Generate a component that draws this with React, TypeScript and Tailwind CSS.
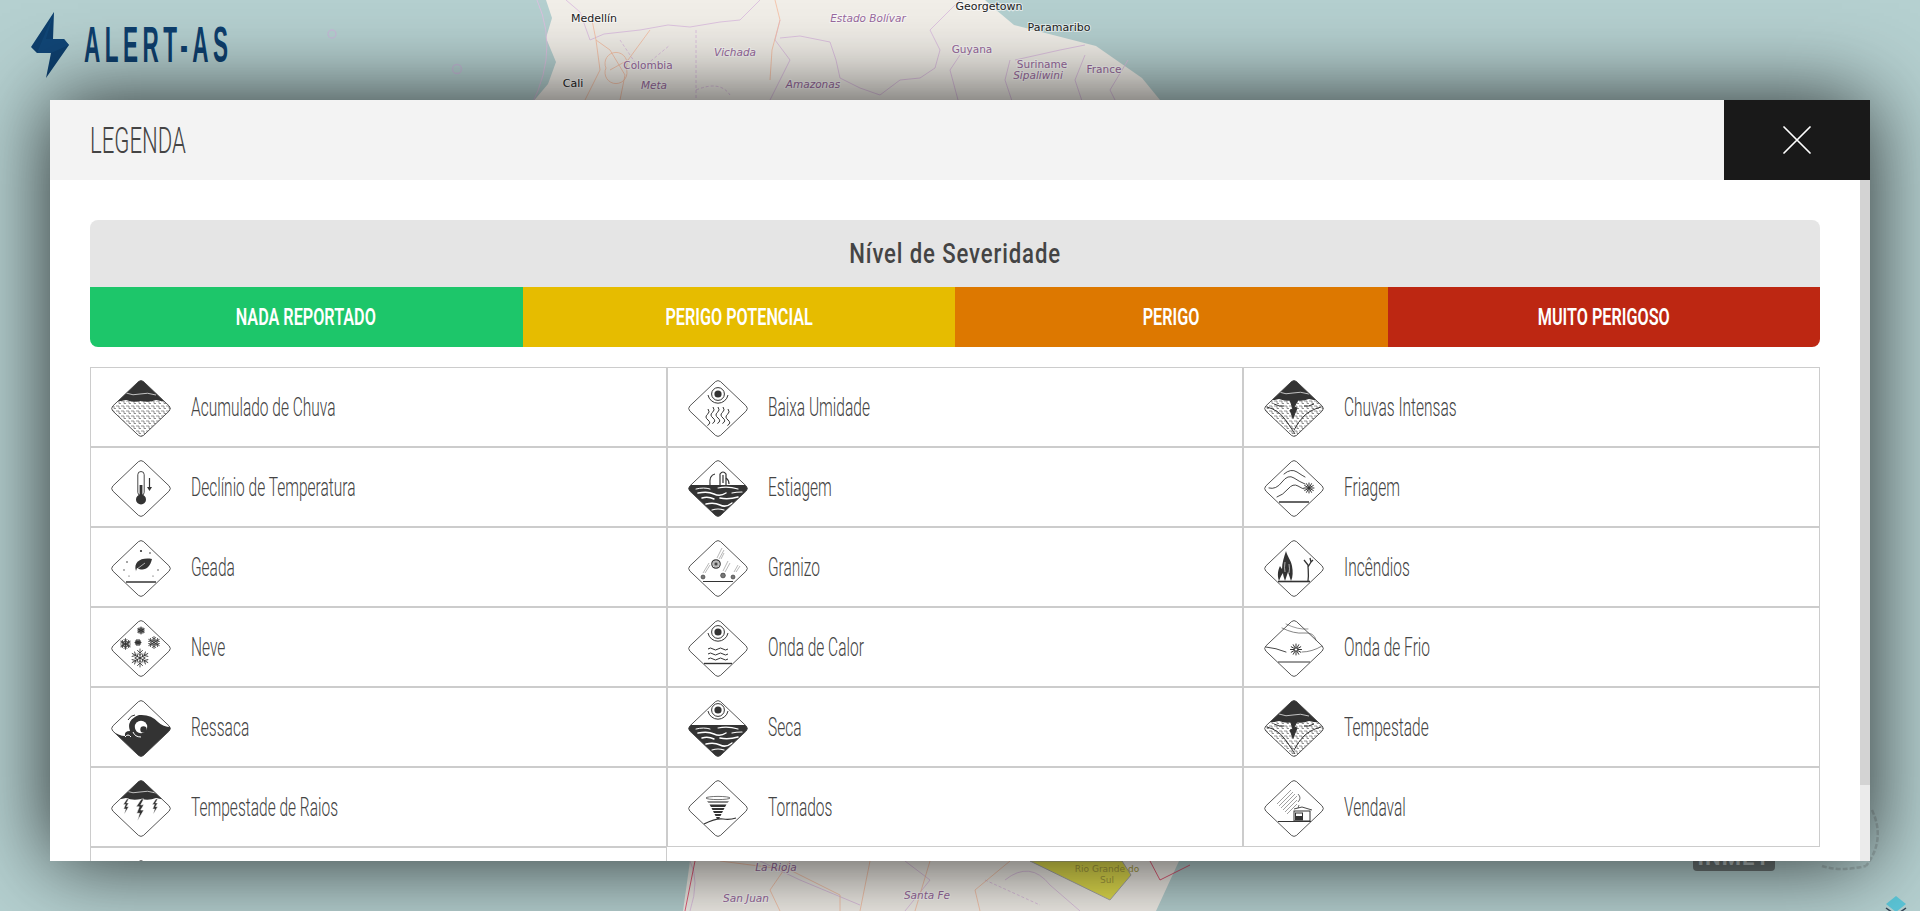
import type { ReactNode } from "react";

const INK = "#333";

const asterisk = (cx: number, cy: number, r: number, w = 0.8) => (
  <g stroke={INK} strokeWidth={w} strokeLinecap="round">
    {[0, 30, 60, 90, 120, 150].map((a) => {
      const dx = Math.cos((a * Math.PI) / 180) * r;
      const dy = Math.sin((a * Math.PI) / 180) * r;
      return <line key={a} x1={cx - dx} y1={cy - dy} x2={cx + dx} y2={cy + dy} />;
    })}
  </g>
);

// six arms with little branches, for the snow icon
const flake = (cx: number, cy: number, r: number) => (
  <g stroke={INK} strokeWidth=".85" strokeLinecap="round" fill="none">
    {[0, 60, 120, 180, 240, 300].map((a) => (
      <g key={a} transform={`rotate(${a} ${cx} ${cy})`}>
        <line x1={cx} y1={cy} x2={cx} y2={cy - r} />
        <path d={`M${cx - r * 0.28} ${cy - r * 0.85}L${cx} ${cy - r * 0.55}L${cx + r * 0.28} ${cy - r * 0.85}`} />
        <path d={`M${cx - r * 0.22} ${cy - r * 0.5}L${cx} ${cy - r * 0.3}L${cx + r * 0.22} ${cy - r * 0.5}`} />
      </g>
    ))}
  </g>
);

const sun = (cy: number) => (
  <g fill="none" stroke={INK}>
    <circle cx="30" cy={cy} r="3.6" fill={INK} stroke="none" />
    <circle cx="30" cy={cy} r="6.4" strokeWidth="1" />
    <path d={`M20 ${cy + 1}a10.2 10.2 0 0 0 20 0`} strokeWidth="1" />
  </g>
);

const bolt = (x: number, y: number, s = 1) => (
  <path
    transform={`translate(${x} ${y}) scale(${s})`}
    d="M1 0L-3 6L-.6 6L-2.6 11L-.4 11L-2 17L3 8.5L.6 8.5L3 4.5L.6 4.5L3 0Z"
    fill={INK}
    stroke="#fff"
    strokeWidth=".5"
  />
);

const stormTop = (h: number) => (
  <g clipPath="url(#badge-clip)">
    <path d={`M0 0H60V${h}Q52 ${h + 1} 45 ${h - 1}Q38 ${h + 2} 30 ${h}Q22 ${h + 2} 15 ${h - 1}Q8 ${h + 1} 0 ${h}Z`} fill={INK} />
    <path d={`M15 ${h - 8}Q22 ${h - 5} 29 ${h - 7}T45 ${h - 6}`} fill="none" stroke="#fff" strokeWidth=".7" />
  </g>
);

const cracks = (
  <g fill="none" stroke={INK} strokeWidth="1">
    <path d="M3 27Q14 30 20 38T31 54" />
    <path d="M57 27Q46 30 40 36T30 50" />
    <path d="M10 24Q16 27 20 26" />
    <path d="M50 24Q44 27 40 26" />
    <path d="M26 20L29 29L26 30L29 38L33 28L30 27L34 20Z" fill={INK} />
  </g>
);

const water = (top: number) => (
  <g clipPath="url(#badge-clip)">
    <rect x="0" y={top} width="60" height={57 - top} fill={INK} />
    <g fill="none" stroke="#fff" strokeLinecap="round">
      <path d={`M8 ${top + 4}Q16 ${top + 2} 22 ${top + 4}`} strokeWidth="1" />
      <path d={`M30 ${top + 3}Q40 ${top + 1} 50 ${top + 4}`} strokeWidth="1.2" />
      <path d={`M10 ${top + 8}Q20 ${top + 6} 26 ${top + 9}T38 ${top + 8}`} strokeWidth="1.5" />
      <path d={`M44 ${top + 8}Q48 ${top + 7} 54 ${top + 7}`} strokeWidth="1.2" />
      <path d={`M14 ${top + 13}Q20 ${top + 11} 26 ${top + 14}`} strokeWidth="1.4" />
      <path d={`M32 ${top + 13}Q40 ${top + 15} 50 ${top + 12}`} strokeWidth="1.6" />
      <path d={`M18 ${top + 19}Q26 ${top + 17} 32 ${top + 20}T44 ${top + 18}`} strokeWidth="1.5" />
      <path d={`M24 ${top + 25}Q30 ${top + 23} 36 ${top + 25}`} strokeWidth="1.2" />
    </g>
  </g>
);

const icons: Record<string, ReactNode> = {
  acumulado: (
    <>
      <path d="M0 21H60V57H0Z" fill="url(#rain-dots)" clipPath="url(#badge-clip)" />
      {stormTop(21)}
    </>
  ),
  umidade: (
    <>
      {sun(14)}
      <g fill="none" stroke={INK} strokeWidth="1">
        {[20, 25, 30, 35, 40].map((x) => (
          <path key={x} d={`M${x} ${x === 20 || x === 40 ? 29 : 27}q2.5 3-.6 5.5t.6 5.5t-.6 5.5`} />
        ))}
      </g>
    </>
  ),
  chuvas: (
    <>
      <path d="M0 20H60V57H0Z" fill="url(#rain-dots)" clipPath="url(#badge-clip)" />
      {stormTop(20)}
      {cracks}
    </>
  ),
  declinio: (
    <>
      <g fill="none" stroke={INK}>
        <rect x="26.8" y="11.5" width="6.4" height="24" rx="3.2" strokeWidth=".9" />
      </g>
      <rect x="28.6" y="25" width="2.8" height="12" fill={INK} />
      <circle cx="30" cy="39.5" r="5" fill={INK} />
      <path d="M38.5 18V28" stroke={INK} strokeWidth="1.2" />
      <path d="M36 27H41L38.5 31Z" fill={INK} />
    </>
  ),
  estiagem: (
    <>
      {water(25)}
      <g fill="none" stroke={INK} strokeWidth="1.2">
        <path d="M22 25Q21 15 27 14" />
        <path d="M32 25V14Q35 10 38 14V25M35 15V23" />
        <path d="M38 18Q41 20 41 24" />
      </g>
    </>
  ),
  friagem: (
    <>
      <g fill="none" stroke={INK} strokeWidth=".9" strokeLinecap="round">
        <path d="M20 14Q27 8 33 12T41 17" />
        <path d="M5 28Q12 30 18 22T30 18T41 24" />
        <path d="M13 37Q19 35 24 29T34 26T40 29" />
      </g>
      {asterisk(45, 28, 5, 1)}
      <path d="M15 42H45" stroke={INK} strokeWidth="1.5" />
    </>
  ),
  geada: (
    <>
      <path d="M25 31C22 22 30 17 41 19C39 28 33 32 26 28L24 34Z" fill={INK} />
      <path d="M26 29L34 23" stroke="#fff" strokeWidth=".6" />
      <g fill={INK}>
        <circle cx="30" cy="11" r="1.1" />
        <circle cx="39" cy="13" r=".8" />
        <circle cx="16" cy="22" r=".8" />
        <circle cx="13" cy="30" r=".7" />
        <circle cx="47" cy="30" r=".7" />
        <circle cx="18" cy="36" r=".6" />
        <circle cx="42" cy="36" r=".6" />
      </g>
      <path d="M15 42H45" stroke={INK} strokeWidth="1.5" />
    </>
  ),
  granizo: (
    <>
      <g stroke="#999" strokeWidth=".7" fill="none">
        <path d="M29 18L34 8M31 19L36 10M33 19L36 13" />
        <path d="M15 33L21 23M17 33L22 25" />
        <path d="M35 31L40 21M37 32L42 23" />
        <path d="M46 32L50 25M48 32L52 26" />
      </g>
      <circle cx="28" cy="24" r="4.2" fill="#fff" stroke={INK} strokeWidth="1.2" />
      {asterisk(28, 24, 2.6, 0.6)}
      <circle cx="15" cy="37" r="2" fill="#777" stroke={INK} strokeWidth=".6" />
      <circle cx="35" cy="35.5" r="2.4" fill="#777" stroke={INK} strokeWidth=".6" />
      <circle cx="45" cy="37" r="2" fill="#777" stroke={INK} strokeWidth=".6" />
      <path d="M15 41.5H45" stroke={INK} strokeWidth="1" />
    </>
  ),
  incendios: (
    <>
      <path
        d="M15 41C13 35 14 30 16 26C17 28 18 29 18 29C18 23 20 17 22 11C23 16 27 20 28 26C29 31 29 37 27 41C26 38 25 35 24 32C23 35 22 38 21 41C20 38 19 35 19 33C17 36 16 38 15 41Z"
        fill={INK}
      />
      <path d="M21 22Q20 28 21 32M25 24Q26 29 25 33" fill="none" stroke="#fff" strokeWidth=".6" />
      <path d="M44 41C45 34 44 30 44 25L40 20M44 27L47 22M47 22L46 18M47 22L49 20" fill="none" stroke={INK} strokeWidth="1.3" />
      <path d="M14 41.5H46" stroke={INK} strokeWidth="1.6" />
    </>
  ),
  neve: (
    <>
      {flake(30, 10.5, 3.6)}
      {flake(14.5, 24, 5.4)}
      {asterisk(27, 22.5, 3, 1.1)}
      {flake(43, 22.5, 6)}
      {flake(29, 38, 9)}
    </>
  ),
  calor: (
    <>
      {sun(12)}
      <g fill="none" stroke={INK} strokeWidth="1">
        <path d="M20 29q2.5-2 5 0t5 0t5 0t5 0" />
        <path d="M20 34q2.5-2 5 0t5 0t5 0t5 0" />
        <path d="M20 39q2.5-2 5 0t5 0t5 0t5 0" />
      </g>
      <path d="M16 43.5H44" stroke={INK} strokeWidth="1.4" />
    </>
  ),
  frio: (
    <>
      <g fill="none" stroke={INK} strokeLinecap="round">
        <path d="M18 8Q30 14 40 13T52 20" strokeWidth=".6" />
        <path d="M22 4Q34 10 44 9" strokeWidth=".5" />
        <path d="M2 27Q12 28 22 32" strokeWidth=".9" />
        <path d="M38 32Q48 32 58 26" strokeWidth=".6" />
      </g>
      {asterisk(32, 29.5, 5.5, 1)}
      <circle cx="32" cy="29.5" r="1.6" fill="#fff" stroke={INK} strokeWidth=".8" />
      <path d="M14 42H46" stroke={INK} strokeWidth="1" />
    </>
  ),
  ressaca: (
    <g clipPath="url(#badge-clip)">
      <path d="M0 30Q8 36 14 36Q13 31 19 31Q15 20 28 15Q40 14 47 22Q52 27 60 27V57H0Z" fill={INK} />
      <circle cx="30" cy="27" r="6.2" fill="#fff" />
      <circle cx="32.5" cy="29.5" r="3.2" fill={INK} />
      <path d="M22 32Q24 37 30 37" fill="none" stroke="#fff" strokeWidth="1" />
      <path d="M14 37Q17 33 20 37" fill="none" stroke="#fff" strokeWidth="1" />
      <path d="M17 20Q20 15 24 15" fill="none" stroke={INK} strokeWidth="1" />
    </g>
  ),
  seca: (
    <>
      {sun(10)}
      {water(25)}
    </>
  ),
  tempestade: (
    <>
      <path d="M0 22H60V57H0Z" fill="url(#rain-dots)" clipPath="url(#badge-clip)" />
      {stormTop(22)}
      {cracks}
    </>
  ),
  raios: (
    <>
      {stormTop(19)}
      {bolt(15, 19, 0.9)}
      {bolt(29, 19, 1.3)}
      {bolt(44, 19, 0.9)}
    </>
  ),
  tornados: (
    <>
      <g stroke={INK} fill="none">
        <ellipse cx="30" cy="18" rx="12" ry="1.6" strokeWidth=".7" />
      </g>
      <path d="M19 21H41L39.5 23H20.5Z" fill="#888" />
      <path d="M21.5 24.5H38.5L37 27H23Z" fill={INK} />
      <path d="M23.5 28H36.5L35.5 30H24.5Z" fill={INK} />
      <path d="M25 31H35L34 33H26Z" fill={INK} />
      <path d="M26.5 34H33.5L32.5 36H27.5Z" fill={INK} />
      <path d="M28 37H32L31 39H29Z" fill={INK} />
      <path d="M16 44Q28 38 35 39T48 38" fill="none" stroke={INK} strokeWidth="1.2" />
    </>
  ),
  vendaval: (
    <>
      <g stroke="#777" strokeWidth=".7">
        <path d="M13 24L27 10M15 26L29 12M17 28L31 14M19 30L33 16M21 32L33 20M23 34L33 24" />
      </g>
      <path d="M34 14Q38 18 34 22M35 25L34 28" fill="none" stroke={INK} strokeWidth=".7" />
      <path d="M30 29L38 27L48 30" fill="none" stroke={INK} strokeWidth=".9" />
      <rect x="30" y="31" width="16" height="10" fill="#fff" stroke={INK} strokeWidth="1" />
      <rect x="31" y="32.5" width="8" height="8" fill={INK} />
      <rect x="32" y="33.5" width="6" height="2.5" fill="#fff" />
      <path d="M14 41.5H47" stroke={INK} strokeWidth="1.1" />
    </>
  ),
  extra: null,
};

const rows = [
  { key: "acumulado", label: "Acumulado de Chuva" },
  { key: "umidade", label: "Baixa Umidade" },
  { key: "chuvas", label: "Chuvas Intensas" },
  { key: "declinio", label: "Declínio de Temperatura" },
  { key: "estiagem", label: "Estiagem" },
  { key: "friagem", label: "Friagem" },
  { key: "geada", label: "Geada" },
  { key: "granizo", label: "Granizo" },
  { key: "incendios", label: "Incêndios" },
  { key: "neve", label: "Neve" },
  { key: "calor", label: "Onda de Calor" },
  { key: "frio", label: "Onda de Frio" },
  { key: "ressaca", label: "Ressaca" },
  { key: "seca", label: "Seca" },
  { key: "tempestade", label: "Tempestade" },
  { key: "raios", label: "Tempestade de Raios" },
  { key: "tornados", label: "Tornados" },
  { key: "vendaval", label: "Vendaval" },
  { key: "extra", label: "" },
];

const severity = [
  { label: "NADA REPORTADO", bg: "bg-[#1dc66a]" },
  { label: "PERIGO POTENCIAL", bg: "bg-[#e6bc00]" },
  { label: "PERIGO", bg: "bg-[#dd7800]" },
  { label: "MUITO PERIGOSO", bg: "bg-[#bd2712]" },
];

const DIAMOND =
  "M27.5 1.6Q30 -.4 32.5 1.6L58.2 26Q60.5 28.5 58.2 31L32.5 55.4Q30 57.4 27.5 55.4L1.8 31Q-.5 28.5 1.8 26Z";

function Badge({ name }: { name: string }) {
  return (
    <svg viewBox="0 0 60 57" className="w-[60px] h-[57px] shrink-0">
      <path d={DIAMOND} fill="#fff" />
      {icons[name]}
      <path d={DIAMOND} fill="none" stroke="#444" strokeWidth=".9" />
    </svg>
  );
}

function MapLabel({ x, y, children, city, italic }: { x: number; y: number; children: string; city?: boolean; italic?: boolean }) {
  return (
    <text
      x={x}
      y={y}
      textAnchor="middle"
      fontSize={city ? 11 : 10.5}
      fontStyle={italic ? "italic" : "normal"}
      fill={city ? "#222" : "#9a6a9e"}
      stroke="#fff"
      strokeWidth="2"
      strokeOpacity=".6"
      paintOrder="stroke"
      className="font-['DejaVu_Sans',sans-serif]"
    >
      {children}
    </text>
  );
}

function MapBackground() {
  return (
    <svg viewBox="0 0 1920 911" className="absolute inset-0 w-[1920px] h-[911px]">
      <path
        d="M546 0L552 18L546 38L556 62L548 84L526 110L690 861L683 911H1156L1179 861L1160 100L1142 78L1096 46L1014 25L995 9L985 0Z"
        fill="#f2efe9"
      />
      <g fill="none" stroke="#dcc0e0" strokeWidth=".9" strokeLinejoin="round">
        <path d="M537 0Q550 30 546 60T522 122" />
        <path d="M566 0L580 12L590 40L604 34L640 30L668 25L690 27L720 22L740 20L760 0" />
        <path d="M780 20L775 40L790 60L770 100" />
        <path d="M780 38L800 36L830 42L836 60L840 78L860 88L880 95L900 80L920 78L935 68L940 50L930 30L960 0" />
        <path d="M960 55L950 70L958 100" />
        <path d="M1010 60L1005 80L1015 110" />
        <path d="M1085 55L1075 80L1085 110" />
        <path d="M1128 60L1110 90L1120 110" />
        <path d="M1015 60L1060 50L1085 45" />
        <path d="M696 90Q720 80 730 95" strokeDasharray="3 2" />
        <path d="M696 30V100" strokeDasharray="3 2" />
        <path d="M620 40L640 70L670 45" strokeDasharray="3 2" />
        <path d="M690 861Q700 880 690 911" />
        <path d="M760 861L800 880L860 905" />
        <path d="M905 861L930 880L905 911" />
        <path d="M1005 880Q1030 860 1050 885L1080 911" />
        <path d="M985 880L1040 905" strokeDasharray="3 2" />
      </g>
      <g fill="none" stroke="#f6bda0" strokeWidth=".8" strokeLinejoin="round">
        <path d="M592 20L596 40L610 50L625 75L620 100" />
        <path d="M596 40L600 70L585 100" />
        <path d="M650 30L628 60L610 70" />
        <path d="M606 68a11 11 0 1 1 20 0a11 11 0 1 1 -20 0" />
        <path d="M775 0L780 20L772 50L770 80" />
        <path d="M720 861L790 870L840 895L840 911" />
        <path d="M790 861L770 890L780 911" />
        <path d="M870 861L860 911M930 861L915 911M1010 861L975 890L980 911" />
      </g>
      <path d="M1030 861H1122L1131 875L1110 900Z" fill="#e4e04e" stroke="#aaa" />
      <path d="M1150 861L1160 880L1190 865" fill="none" stroke="#e23a5e" strokeWidth=".8" />
      <path d="M695 861L685 911" fill="none" stroke="#e23a5e" strokeWidth=".8" />
      <g fill="none" stroke="#c5bcd8" strokeWidth="1.3">
        <circle cx="332" cy="34" r="4" />
        <circle cx="457" cy="69" r="4.5" />
      </g>
      <MapLabel x={594} y={22} city>Medellín</MapLabel>
      <MapLabel x={573} y={87} city>Cali</MapLabel>
      <MapLabel x={648} y={69}>Colombia</MapLabel>
      <MapLabel x={735} y={56} italic>Vichada</MapLabel>
      <MapLabel x={654} y={89} italic>Meta</MapLabel>
      <MapLabel x={813} y={88} italic>Amazonas</MapLabel>
      <MapLabel x={868} y={22} italic>Estado Bolívar</MapLabel>
      <MapLabel x={989} y={10} city>Georgetown</MapLabel>
      <MapLabel x={1059} y={31} city>Paramaribo</MapLabel>
      <MapLabel x={972} y={53}>Guyana</MapLabel>
      <MapLabel x={1042} y={68}>Suriname</MapLabel>
      <MapLabel x={1038} y={79} italic>Sipaliwini</MapLabel>
      <MapLabel x={1104} y={73}>France</MapLabel>
      <MapLabel x={776} y={871} italic>La Rioja</MapLabel>
      <MapLabel x={746} y={902} italic>San Juan</MapLabel>
      <MapLabel x={927} y={899} italic>Santa Fe</MapLabel>
      <text x="1107" y="872" textAnchor="middle" fontSize="9" fill="#a8a040" className="font-['DejaVu_Sans',sans-serif]">Rio Grande do</text>
      <text x="1107" y="883" textAnchor="middle" fontSize="9" fill="#a8a040" className="font-['DejaVu_Sans',sans-serif]">Sul</text>
      <g fill="none" stroke="#9fb4b4" strokeWidth="2.5" strokeDasharray="5 2">
        <path d="M1872 810Q1886 840 1866 866" />
        <path d="M1822 866Q1840 872 1866 866" />
      </g>
      <path d="M1896 896L1906 904L1896 912L1886 904Z" fill="#5cc6d8" />
      <path d="M1886 908L1896 915L1906 908" fill="none" stroke="#345" strokeWidth="1.5" />
    </svg>
  );
}

export default function App() {
  return (
    <div className="relative h-[911px] w-[1920px] overflow-hidden bg-[#b5d0d0] font-['Roboto',sans-serif]">
      <MapBackground />

      {/* badge INMET, mostly hidden by the modal */}
      <div className="absolute left-[1693px] top-[845px] w-[82px] h-[26px] rounded bg-[#6d7777] flex items-end justify-center text-[22px] leading-[26px] font-bold text-[#b9c3c3] tracking-wider">
        INMET
      </div>

      {/* logo */}
      <div className="absolute left-[31px] top-[12px] flex items-center gap-[15px]">
        <svg viewBox="0 0 38 66" className="w-[38px] h-[66px]">
          <path d="M23 0L0 35L6 41H20L15 66L38 33L33 27H22Z" fill="#0e3f6d" />
          <path d="M23 0L15 27H33L38 33L20 41L6 41Z" fill="#134a7c" opacity=".7" />
        </svg>
        <span className="inline-block w-[144px] origin-left scale-x-[.45] text-[50px] leading-none font-bold tracking-[.2em] whitespace-nowrap text-[#0e3f6d] font-['Liberation_Sans',sans-serif]">
          ALERT-AS
        </span>
      </div>

      {/* shared svg defs for the badges */}
      <svg className="absolute w-0 h-0">
        <defs>
          <clipPath id="badge-clip">
            <path d={DIAMOND} />
          </clipPath>
          <pattern id="rain-dots" width="5" height="5" patternUnits="userSpaceOnUse">
            <rect width="5" height="5" fill="#fff" />
            <path d="M0 1H3V3.5H5" fill="none" stroke="#777" strokeWidth=".8" />
          </pattern>
        </defs>
      </svg>

      <div className="relative pt-[100px] pl-[50px]">
        <div className="w-[1820px] h-[761px] flex flex-col bg-white shadow-[0_0_80px_rgba(0,0,0,0.8)]">
          <div className="h-20 shrink-0 flex bg-[#f3f3f3]">
            <div className="flex-1 flex items-center pl-10 pt-[2px] text-[#444]">
              <span className="inline-block origin-left scale-x-[.615] text-[36px] font-light leading-none">LEGENDA</span>
            </div>
            <button className="w-[146px] flex items-center justify-center bg-[#191919]">
              <svg viewBox="0 0 28 28" className="w-7 h-7">
                <path d="M1 1L27 27M27 1L1 27" stroke="#fff" strokeWidth="1.7" strokeLinecap="round" />
              </svg>
            </button>
          </div>

          <div className="flex-1 flex min-h-0">
            <div className="flex-1 min-w-0 overflow-hidden px-10 pt-10">
              <div className="rounded-lg overflow-hidden">
                <div className="h-[67px] flex items-center justify-center bg-[#e5e5e5] text-[#444]">
                  <span className="inline-block scale-x-[.79] text-[28px] font-medium tracking-[.04em] whitespace-nowrap">Nível de Severidade</span>
                </div>
                <div className="grid grid-cols-4 h-[60px]">
                  {severity.map((s) => (
                    <div key={s.label} className={`flex items-center justify-center text-white ${s.bg}`}>
                      <span className="inline-block scale-x-[.675] text-[24px] font-semibold whitespace-nowrap">{s.label}</span>
                    </div>
                  ))}
                </div>
              </div>

              <div className="grid grid-cols-3 mt-5">
                {rows.map((r) => (
                  <div key={r.key} className="h-20 flex items-center gap-5 pl-5 pt-[2px] border border-[#ccc]">
                    <Badge name={r.key} />
                    <span className="inline-block origin-left scale-x-[.62] text-[25px] font-light text-[#444] whitespace-nowrap">{r.label}</span>
                  </div>
                ))}
              </div>
            </div>

            {/* scrollbar */}
            <div className="w-[10px] shrink-0 bg-[#ebebeb]">
              <div className="h-[605px] bg-[#d3d3d3]" />
            </div>
          </div>
        </div>
      </div>
    </div>
  );
}
